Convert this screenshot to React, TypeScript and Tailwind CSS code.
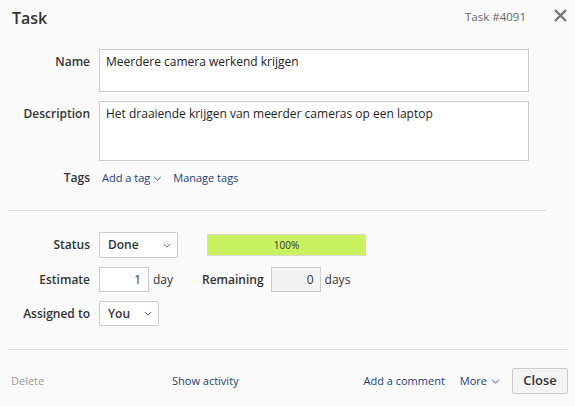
import React from "react";

const Chevron = ({ className = "" }: { className?: string }) => (
  <svg viewBox="0 0 10 6" className={className} fill="none" stroke="currentColor" strokeWidth="1.1">
    <polyline points="1,1 5,5 9,1" />
  </svg>
);

const Label = ({ children }: { children: React.ReactNode }) => (
  <div className="w-[90px] shrink-0 text-right text-[12px] font-semibold text-[#333]">{children}</div>
);

export default function App() {
  return (
    <div
      className="relative h-[406px] w-[575px] overflow-hidden bg-[#fafafa] text-[#333]"
      style={{ fontFamily: '"Open Sans", "Liberation Sans", sans-serif' }}
    >
      {/* header */}
      <div className="flex h-[34px] items-center pl-3 pr-2">
        <h1 className="mt-[2px] text-[16px] font-semibold text-[#333]">Task</h1>
        <div className="flex-1" />
        <span className="text-[11.5px] text-[#666]">Task #4091</span>
        <button className="ml-[28px] mt-[-4px] text-[#777]">
          <svg viewBox="0 0 14 14" className="h-[13px] w-[13px]" stroke="currentColor" strokeWidth="2.6" strokeLinecap="square">
            <line x1="2" y1="2" x2="12" y2="12" />
            <line x1="12" y1="2" x2="2" y2="12" />
          </svg>
        </button>
      </div>

      {/* name / description / tags */}
      <div className="mt-[15px] flex items-start">
        <div className="pt-[4px]">
          <Label>Name</Label>
        </div>
        <div className="ml-[9px] h-[43px] w-[430px] border border-[#ccc] bg-white px-[6px] pt-[3px] text-[12px] leading-[18px] text-[#222]">
          Meerdere camera werkend krijgen
        </div>
      </div>
      <div className="mt-[9px] flex items-start">
        <div className="pt-[4px]">
          <Label>Description</Label>
        </div>
        <div className="ml-[9px] h-[60px] w-[430px] border border-[#ccc] bg-white px-[6px] pt-[3px] text-[12px] leading-[18px] text-[#222]">
          Het draaiende krijgen van meerder cameras op een laptop
        </div>
      </div>
      <div className="mt-[8px] flex items-center leading-[18px]">
        <Label>Tags</Label>
        <a className="ml-[12px] flex items-center text-[11px] text-[#1d3f73]">
          Add a tag
          <Chevron className="ml-[3px] mt-[1px] h-[5px] w-[9px]" />
        </a>
        <a className="ml-[11px] text-[11px] text-[#1d3f73]">Manage tags</a>
      </div>

      <div className="ml-[8px] mt-[23px] h-px w-[538px] bg-[#ddd]" />

      {/* status etc. */}
      <div className="mt-[21px] flex items-center">
        <Label>Status</Label>
        <div className="ml-[9px] flex h-[26px] w-[79px] items-center justify-between rounded-[2px] border border-[#ccc] bg-white pl-[8px] pr-[6px] text-[12px] font-semibold">
          <span>Done</span>
          <Chevron className="h-[5px] w-[8px] text-[#555]" />
        </div>
        <div className="ml-[29px] flex h-[22px] w-[159px] items-center justify-center border border-[#d9dcd0] bg-[#c9f060] text-[10px] text-[#333]">
          100%
        </div>
      </div>
      <div className="mt-[9px] flex items-center">
        <Label>Estimate</Label>
        <div className="ml-[9px] h-[25px] w-[50px] border border-[#ccc] bg-white pr-[7px] text-right text-[12px] leading-[23px]">
          1
        </div>
        <span className="ml-[4px] text-[12px]">day</span>
        <span className="ml-[29px] text-[12px] font-semibold">Remaining</span>
        <div className="ml-[7px] h-[25px] w-[50px] border border-[#ccc] bg-[#f4f4f4] pr-[6px] text-right text-[12px] leading-[23px]">
          0
        </div>
        <span className="ml-[4px] text-[12px]">days</span>
      </div>
      <div className="mt-[9px] flex items-center">
        <Label>Assigned to</Label>
        <div className="ml-[9px] flex h-[25px] w-[60px] items-center justify-between rounded-[2px] border border-[#ccc] bg-white pl-[8px] pr-[6px] text-[12px] font-semibold">
          <span>You</span>
          <Chevron className="h-[5px] w-[8px] text-[#555]" />
        </div>
      </div>

      <div className="ml-[8px] mt-[23px] h-px w-[559px] bg-[#ddd]" />

      {/* footer */}
      <div className="mt-[18px] flex items-center pr-[7px] text-[11px]">
        <span className="w-[172px] pl-[11px] text-[#999]">Delete</span>
        <a className="text-[#1d3f73]">Show activity</a>
        <div className="flex-1" />
        <a className="text-[#1d3f73]">Add a comment</a>
        <a className="ml-[15px] flex items-center text-[#1d3f73]">
          More
          <Chevron className="ml-[4px] mt-[1px] h-[5px] w-[9px]" />
        </a>
        <button className="ml-[12px] h-[26px] w-[56px] rounded-[2px] border border-[#ccc] bg-[#f4f4f4] text-[13px] font-semibold text-[#333]">
          Close
        </button>
      </div>
    </div>
  );
}
